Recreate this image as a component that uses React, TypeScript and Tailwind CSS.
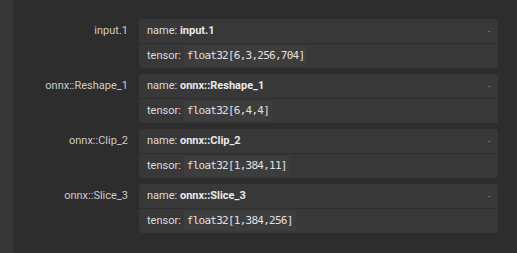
import React from "react";

const items = [
  { label: "input.1", name: "input.1", type: "float32[6,3,256,704]" },
  { label: "onnx::Reshape_1", name: "onnx::Reshape_1", type: "float32[6,4,4]" },
  { label: "onnx::Clip_2", name: "onnx::Clip_2", type: "float32[1,384,11]" },
  { label: "onnx::Slice_3", name: "onnx::Slice_3", type: "float32[1,384,256]" },
];

export default function App() {
  return (
    <div className="flex h-[253px] w-[517px] bg-[#2d2d2d] overflow-hidden" style={{ fontFamily: 'Roboto, "Open Sans", sans-serif' }}>
      <div className="w-[13px] shrink-0 bg-[#363636]" />
      <div className="flex flex-col gap-[6px] pt-[19px]">
        {items.map((it) => (
          <div key={it.label} className="flex">
            <div className="w-[115px] h-[24px] leading-[24px] text-right text-[11px] text-[#cccccc] whitespace-nowrap">
              {it.label}
            </div>
            <div className="ml-[11px] w-[359px] rounded-[3px] bg-[#383838] overflow-hidden">
              <div className="flex h-[24px] items-center justify-between pl-[8px] pr-[8px] text-[11px] text-[#dcdcdc]">
                <div className="whitespace-nowrap">
                  name: <span className="font-bold text-[#e8e8e8]">{it.name}</span>
                </div>
                <span className="text-[9px] leading-none text-[#8a8a8a]">-</span>
              </div>
              <div className="h-[1px] bg-[#2f2f2f]" />
              <div className="flex h-[24px] items-center pl-[8px] text-[11px] text-[#dcdcdc]">
                <span className="whitespace-nowrap">tensor:</span>
                <span
                  className="ml-[3px] rounded-[2px] bg-[#3d3d3d] px-[3px] py-[3px] text-[11px] leading-[14px] tracking-[-0.75px] text-[#e0e0e0]"
                  style={{ fontFamily: '"DejaVu Sans Mono", "Liberation Mono", monospace' }}
                >
                  {it.type}
                </span>
              </div>
            </div>
          </div>
        ))}
      </div>
    </div>
  );
}
